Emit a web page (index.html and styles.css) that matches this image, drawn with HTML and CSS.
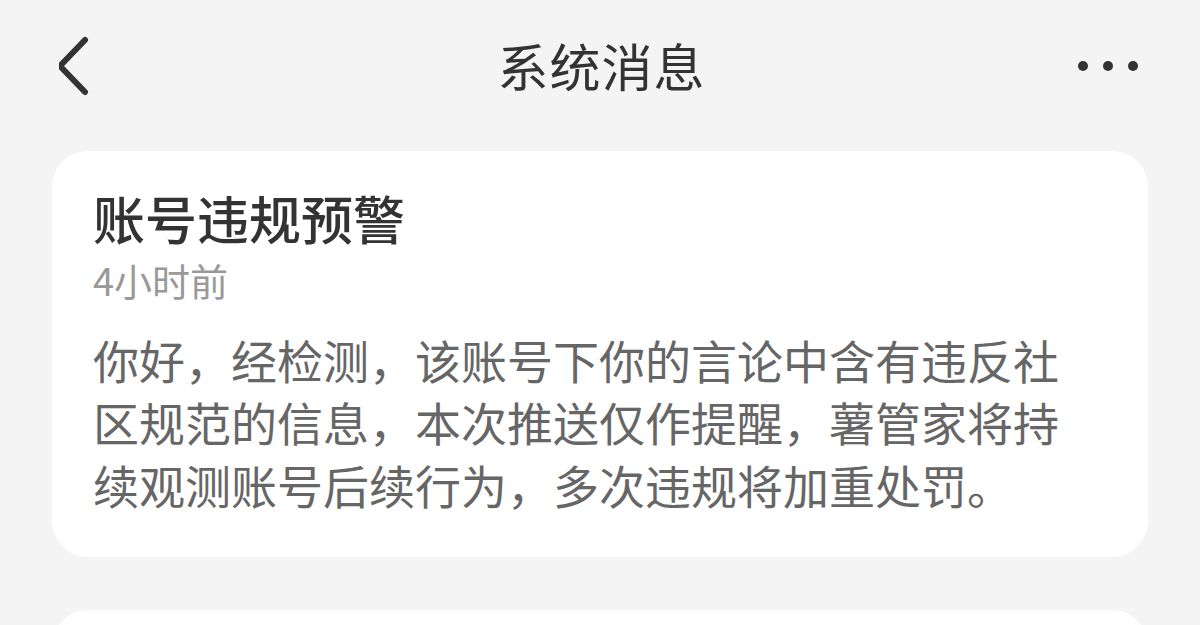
FILE: index.html
```html
<!DOCTYPE html>
<html lang="zh-CN">
<head>
  <meta charset="UTF-8" />
  <meta name="viewport" content="width=device-width, initial-scale=1.0"/>
  <title>系统消息</title>
  <link rel="stylesheet" href="styles.css">
</head>
<body>
  <header class="topbar">
    <button class="icon-btn back-btn" aria-label="返回">
      <svg width="40" height="64" viewBox="0 0 40 64">
        <polyline points="26,6 1,32 26,58" fill="none" stroke="#333" stroke-width="6" stroke-linecap="round" stroke-linejoin="round"/>
      </svg>
    </button>
    <h1 class="page-title">系统消息</h1>
    <button class="icon-btn more-btn" aria-label="更多">
      <span class="dot"></span><span class="dot"></span><span class="dot"></span>
    </button>
  </header>

  <main class="msg-list">
    <article class="msg-card">
      <h2 class="msg-title">账号违规预警</h2>
      <div class="msg-time">4小时前</div>
      <p class="msg-body">你好，经检测，该账号下你的言论中含有违反社区规范的信息，本次推送仅作提醒，薯管家将持续观测账号后续行为，多次违规将加重处罚。</p>
    </article>
    <article class="msg-card">
      <h2 class="msg-title">账号违规预警</h2>
      <div class="msg-time">1天前</div>
      <p class="msg-body">你好，经检测，该账号下你的言论中含有违反社区规范的信息，本次推送仅作提醒。</p>
    </article>
  </main>
</body>
</html>
```

FILE: styles.css
```css
body, html {
  margin: 0;
  padding: 0;
  background-color: #f4f4f4;
  font-family: "Noto Sans CJK SC", "Noto Sans", sans-serif;
  color: #333;
}
.topbar {
  display: grid;
  grid-template-columns: 1fr auto 1fr;
  align-items: center;
  height: 132px;
  padding: 0 56px 0 59px;
}
.icon-btn {
  background: none;
  border: none;
  padding: 0;
  cursor: pointer;
  display: flex;
  align-items: center;
}
.back-btn svg {
  display: block;
}
.page-title {
  margin: 0 0 2px;
  font-size: 51px;
  font-weight: 400;
  letter-spacing: 1px;
  color: #333;
}
.more-btn {
  gap: 15px;
  justify-self: end;
  margin-right: 6px;
}
.dot {
  width: 10px;
  height: 10px;
  border-radius: 50%;
  background: #333;
}
.msg-list {
  padding: 19px 52px 0;
  display: flex;
  flex-direction: column;
  gap: 53px;
}
.msg-card {
  background: #fff;
  border-radius: 36px;
  padding: 33px 80px 42px 41px;
}
.msg-title {
  margin: 0;
  font-size: 52px;
  font-weight: 500;
  line-height: 1.3;
  color: #333;
}
.msg-time {
  font-size: 38px;
  line-height: 1.3;
  color: #999;
  margin-top: 3px;
}
.msg-body {
  margin: 24px 0 0;
  font-size: 46px;
  line-height: 62.5px;
  color: #666;
}
```
